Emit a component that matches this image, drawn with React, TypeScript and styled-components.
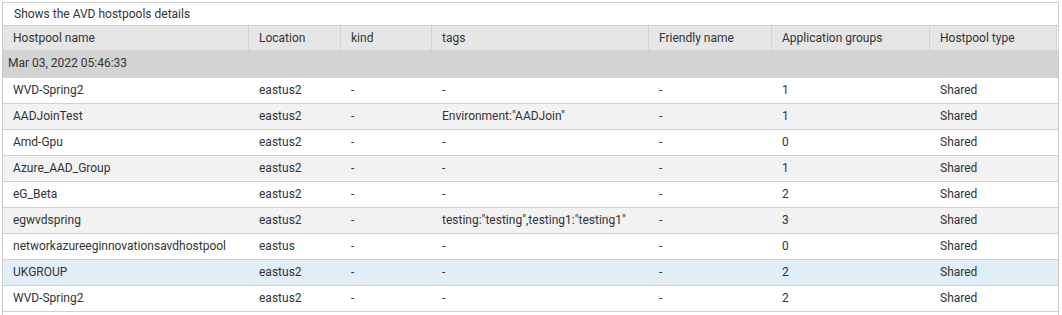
import React from "react";
import styled, { createGlobalStyle } from "styled-components";

const Global = createGlobalStyle`
  html, body { margin: 0; padding: 0; background: #ffffff; overflow: hidden; }
  body { font-family: Roboto, "Liberation Sans", Arial, sans-serif; color: #333333; }
`;

const COLS = "246px 92px 91px 217px 123px 158px 1fr";

const Panel = styled.div`
  margin: 2px 0 0 2px;
  width: 1055px;
  height: 312px;
  border: 1px solid #cccccc;
  border-bottom: none;
  background: #ffffff;
  font-size: 12px;
`;

const Title = styled.div`
  height: 22px;
  line-height: 22px;
  padding-left: 11px;
  border-bottom: 1px solid #cfcfcf;
  color: #333333;
`;

const HeaderRow = styled.div`
  display: grid;
  grid-template-columns: ${COLS};
  height: 24px;
  background: #e6e6e6;
  margin-right: 1px;
`;

const HeaderCell = styled.div`
  line-height: 24px;
  padding-left: 10px;
  border-right: 1px solid #d2d2d2;
  color: #333333;
  white-space: nowrap;
`;

const GroupRow = styled.div`
  height: 27px;
  line-height: 27px;
  padding-left: 5px;
  background: #d3d3d3;
  color: #333333;
  border-bottom: 1px solid #d6d6d6;
`;

const Row = styled.div<{ $tone: "white" | "grey" | "selected" }>`
  display: grid;
  grid-template-columns: ${COLS};
  height: 25px;
  line-height: 25px;
  border-bottom: 1px solid #d0d0d0;
  background: ${(p) =>
    p.$tone === "selected" ? "#e1edf7" : p.$tone === "grey" ? "#f2f2f2" : "#ffffff"};
`;

const Cell = styled.div`
  padding-left: 10px;
  white-space: nowrap;
  overflow: hidden;
  color: #333333;
`;

const headers = [
  "Hostpool name",
  "Location",
  "kind",
  "tags",
  "Friendly name",
  "Application groups",
  "Hostpool type",
];

const rows: string[][] = [
  ["WVD-Spring2", "eastus2", "-", "-", "-", "1", "Shared"],
  ["AADJoinTest", "eastus2", "-", 'Environment:"AADJoin"', "-", "1", "Shared"],
  ["Amd-Gpu", "eastus2", "-", "-", "-", "0", "Shared"],
  ["Azure_AAD_Group", "eastus2", "-", "-", "-", "1", "Shared"],
  ["eG_Beta", "eastus2", "-", "-", "-", "2", "Shared"],
  ["egwvdspring", "eastus2", "-", 'testing:"testing",testing1:"testing1"', "-", "3", "Shared"],
  ["networkazureeginnovationsavdhostpool", "eastus", "-", "-", "-", "0", "Shared"],
  ["UKGROUP", "eastus2", "-", "-", "-", "2", "Shared"],
  ["WVD-Spring2", "eastus2", "-", "-", "-", "2", "Shared"],
];

export default function App() {
  return (
    <>
      <Global />
      <Panel>
        <Title>Shows the AVD hostpools details</Title>
        <HeaderRow>
          {headers.map((h) => (
            <HeaderCell key={h}>{h}</HeaderCell>
          ))}
        </HeaderRow>
        <GroupRow>Mar 03, 2022 05:46:33</GroupRow>
        {rows.map((r, i) => (
          <Row key={i} $tone={i === 7 ? "selected" : i % 2 === 1 ? "grey" : "white"}>
            {r.map((c, j) => (
              <Cell key={j}>{c}</Cell>
            ))}
          </Row>
        ))}
      </Panel>
    </>
  );
}
